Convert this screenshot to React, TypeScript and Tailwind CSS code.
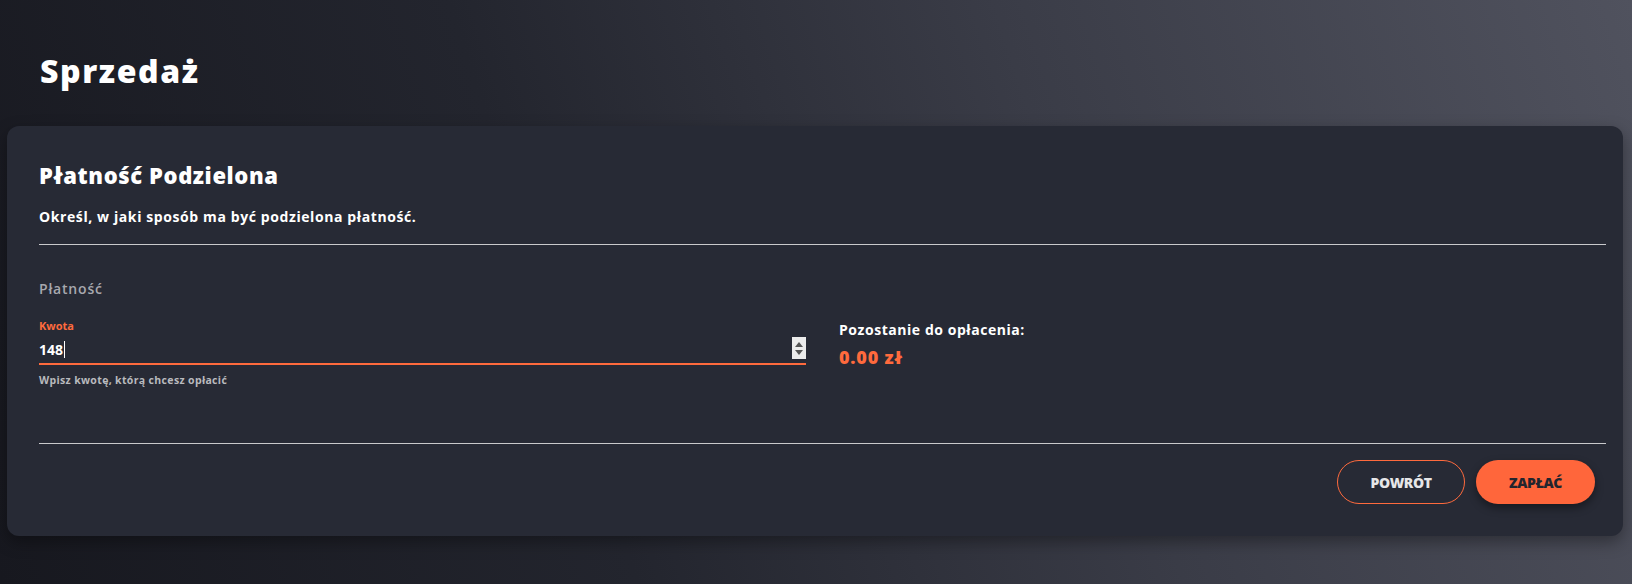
import React from 'react';

function App() {
  return (
    <div className="min-h-screen w-full bg-[linear-gradient(72deg,#17181f_0%,#23252e_35%,#3a3c47_65%,#50525e_100%)] font-['Open_Sans',sans-serif] text-white pb-[47px]">
      {/* Page header */}
      <header className="pt-[50px] pl-[40px] h-[126px]">
        <h1 className="text-[32px] font-extrabold leading-[42px] tracking-[1.6px]">Sprzedaż</h1>
      </header>

      {/* Card */}
      <section className="ml-[7px] w-[1616px] rounded-[12px] bg-[#272a35] pl-[32px] pr-[17px] shadow-[0_6px_16px_rgba(0,0,0,0.35)]">
        <div className="pt-[34px]">
          <h2 className="text-[22px] font-extrabold leading-[30px] tracking-[0.6px]">Płatność Podzielona</h2>
          <p className="mt-[17px] text-[14px] font-bold leading-[20px] tracking-[0.6px]">Określ, w jaki sposób ma być podzielona płatność.</p>
        </div>

        <div className="mt-[17px] h-px bg-[#c9c9cc]" />

        <div className="pt-[34px] pb-[56px]">
          <div className="text-[14px] font-semibold leading-[20px] tracking-[0.8px] text-[#a7a8ae]">Płatność</div>

          <div className="mt-[20px] flex">
            <div className="w-[767px]">
              <label className="block text-[11px] font-bold leading-[14px] text-[#ff6a3d]">Kwota</label>
              <div className="mt-[3px] flex items-center border-b-2 border-[#ff6a3d] h-[29px]">
                <span className="text-[14px] font-bold leading-[20px]">148</span>
                <span className="ml-px h-[17px] w-px bg-white" />
                <div className="ml-auto mb-[3px] flex h-[22px] w-[14px] flex-col items-center justify-center gap-[3px] bg-[#ececec]">
                  <svg width="8" height="5" viewBox="0 0 8 5"><path d="M4 0L8 5H0z" fill="#555" /></svg>
                  <svg width="8" height="5" viewBox="0 0 8 5"><path d="M0 0h8L4 5z" fill="#555" /></svg>
                </div>
              </div>
              <div className="mt-[8px] text-[10.5px] font-bold leading-[14px] tracking-[0.35px] text-[#b9babe]">Wpisz kwotę, którą chcesz opłacić</div>
            </div>

            <div className="ml-[33px] pt-[1px]">
              <div className="text-[14px] font-bold leading-[20px] tracking-[0.55px]">Pozostanie do opłacenia:</div>
              <div className="mt-[5px] text-[18px] font-extrabold leading-[24px] tracking-[0.8px] text-[#ff6a3d]">0.00 zł</div>
            </div>
          </div>
        </div>

        <div className="h-px bg-[#c9c9cc]" />

        <div className="flex justify-end gap-[11px] pt-[16px] pb-[32px] pr-[11px]">
          <button className="h-[44px] w-[128px] rounded-full border border-[#ff6a3d] text-[14px] font-extrabold tracking-[-0.4px] text-[#e6e6e8]">
            POWRÓT
          </button>
          <button className="h-[44px] w-[119px] rounded-full bg-[#ff663b] text-[14px] font-extrabold tracking-[-0.4px] text-[#23252e] shadow-[0_4px_8px_rgba(0,0,0,0.4)]">
            ZAPŁAĆ
          </button>
        </div>
      </section>
    </div>
  );
}

export default App;
